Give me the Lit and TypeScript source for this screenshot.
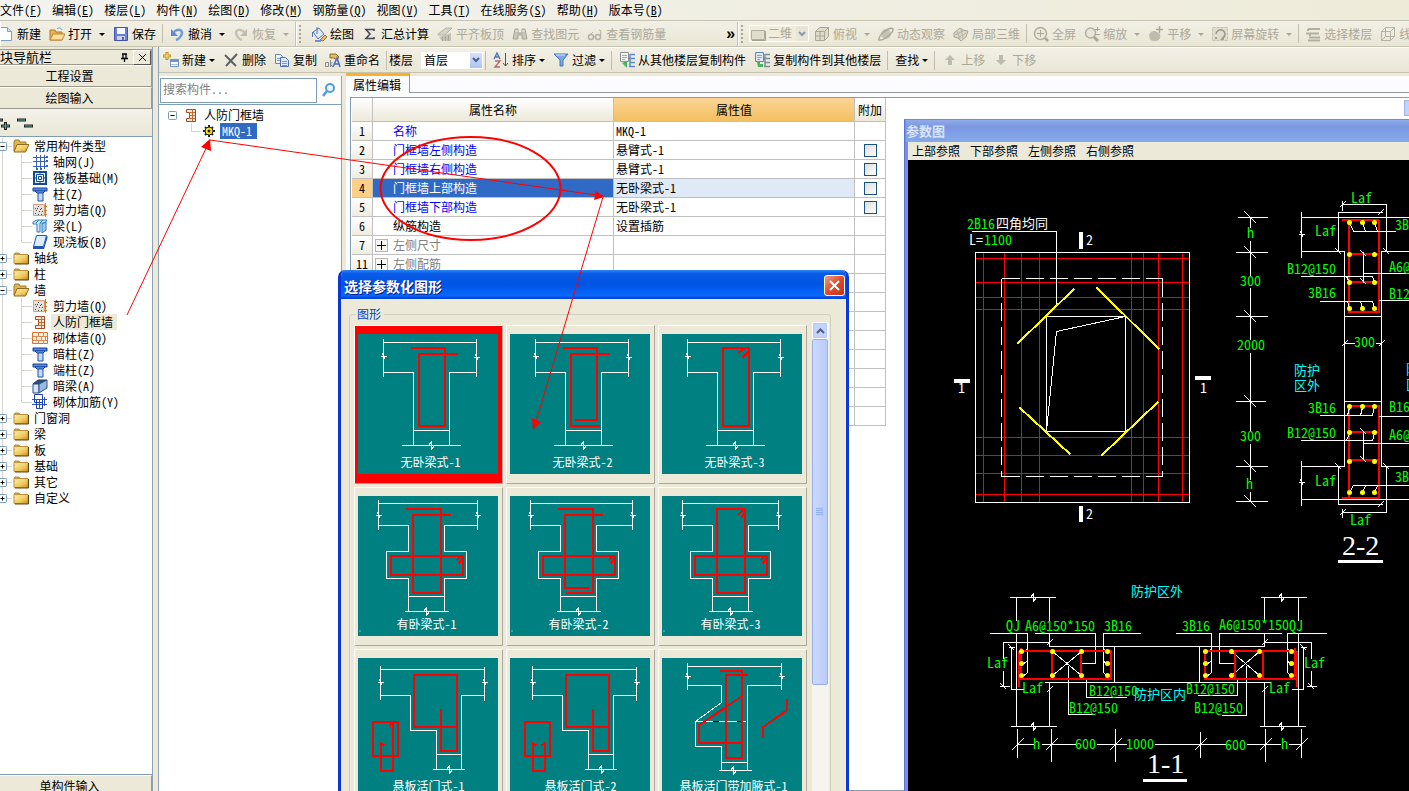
import { LitElement, html, svg, css, nothing } from "lit";
import { customElement, property, state } from "lit/decorators.js";
import { classMap } from "lit/directives/class-map.js";

const fonts = css`
  :host {
    font-family: "Noto Sans Mono CJK SC", "Noto Sans CJK SC", "Liberation Mono", monospace;
    font-size: 12px;
    line-height: 16px;
    color: #000;
  }
  * { box-sizing: border-box; }
`;

/* ---------- icons ---------- */

const gold = svg`<defs><linearGradient id="gold" x1="0" y1="0" x2="1" y2="1"><stop offset="0" stop-color="#fdf0b4"/><stop offset="0.6" stop-color="#f0c95c"/><stop offset="1" stop-color="#c98f1c"/></linearGradient></defs>`;
const folderShut = svg`${gold}<path d="M1 5l1-2h4l1 2z" fill="#e3bd55" stroke="#a98a35"/><path d="M1 4.500h14v9H1z" fill="url(#gold)" stroke="#b8933a"/><path d="M15.500 5v9H2" fill="none" stroke="#5e4510"/>`;
const folderOpen = svg`${gold}<path d="M1 4l1-2h4l1 2h6v9H1z" fill="#e0b64c" stroke="#9a7930"/><path d="M4 6.500h12L12.500 14H1z" fill="url(#gold)" stroke="#8f6b1e"/>`;
const columnIcon = svg`<path d="M1 2h14v3H1z" fill="#5b8be0" stroke="#123f99"/><path d="M3 5h10l-2 2H5z" fill="#a9c7f7" stroke="#123f99"/><path d="M6 7h5v8H6z" fill="#c3dafb" stroke="#1b4fae"/>`;
const wallDots = svg`<path d="M1.500 2.500h11v11h-11z" fill="#e4e0dc" stroke="#d9a080"/><path d="M3 6.500h1M6 4.500h1M9 6.500h1M4 8.500h1M7 9.500h1M10 9.500h1M3 11.500h1M6 12.500h1M9 12.500h1M5 6.500h1M8 7.500h1" stroke="#444"/><path d="M13.500 1v14M12 4.500h3M12 8.500h3M12 12.500h3" stroke="#d9772b"/>`;
const frameWall = svg`<path d="M3.500 2.500h9v12h-9v-3h3v-6h-3z" fill="#fbe7d6" stroke="#a3481c"/><path d="M9.500 2v12M6 5.500h6M6 8.500h6M6 11.500h6" stroke="#c76a35" fill="none"/>`;
const cube = svg`<path d="M1.500 5.500l4-4h9v9l-4 4h-9z" fill="#dedbcb" stroke="#a9a796"/><path d="M1.500 5.500h9v9M10.500 5.500l4-4M6 5.500v9M1.500 10h9" fill="none" stroke="#a9a796"/>`;

const ICONS: Record<string, unknown> = {
  page: svg`<path d="M2.500 1.500h7l4 4v9h-11z" fill="#fdfeff" stroke="#7e9cc4"/><path d="M9.500 1.500v4h4" fill="#cfe0f6" stroke="#7e9cc4"/>`,
  open: svg`<path d="M1 4h5l1 2h6v8H1z" fill="#e8b45a" stroke="#b07a2a"/><path d="M4 8h12l-3 6H1z" fill="#ffe09a" stroke="#b98732"/><path d="M8 3c2-2 4-1 5 1" fill="none" stroke="#6d94c9"/>`,
  save: svg`<path d="M1.500 1.500h13v13h-13z" fill="#6a7fd6" stroke="#4455ad"/><path d="M4 2h8v6H4z" fill="#f4f7ff"/><path d="M4 10h8v4H4z" fill="#c9cfe6"/><path d="M9 11h2v3H9z" fill="#5566b8"/>`,
  undo: svg`<path d="M5 6c4-4 8-2 8 1-1 4-3 6-6 7" fill="none" stroke="#6c9be6" stroke-width="2.5"/><path d="M2 3v7h7z" fill="#5a8ae0"/>`,
  redo: svg`<path d="M11 6C7 2 3 4 3 7c1 4 3 6 6 7" fill="none" stroke="#c5c3b6" stroke-width="2.5"/><path d="M14 3v7H7z" fill="#bdbbae"/>`,
  paint: svg`<path d="M2 6l6-4 5 6-6 5z" fill="#dfe9f7" stroke="#4f77b8"/><path d="M6 1v7M1.500 6v5" stroke="#4f77b8" fill="none"/><path d="M9 14l5-5 2 2-4 4z" fill="#e6bd6b" stroke="#987336"/><path d="M4 15h6" stroke="#6c8fe0" stroke-width="2"/>`,
  sigma: svg`<path d="M12 5V3.500H4l4 4.500-4 4.500h8V11" fill="none" stroke="#444a55" stroke-width="1.600"/>`,
  slab: svg`<path d="M1 8l8-6h6l-7 7H1z" fill="#d6d4c6" stroke="#b5b3a5"/><path d="M2 11l12-4v8H5z" fill="#c4c2b5"/><path d="M5.500 11v4M8.500 10v5M11.500 9v6" stroke="#a9a799"/>`,
  binoc: svg`<path d="M3 3h3v4h4V3h3l2 10h-5V9H6v4H1z" fill="#c6c4b7" stroke="#a8a698"/><path d="M3 5h3M10 5h3" stroke="#efeee6"/>`,
  glasses: svg`<circle cx="4" cy="11" r="2.500" fill="none" stroke="#b3b1a3" stroke-width="1.500"/><circle cx="11" cy="11" r="2.500" fill="none" stroke="#b3b1a3" stroke-width="1.500"/><path d="M6 11h2M13.500 10l.5-5-2-1M2 10l4-4" fill="none" stroke="#b3b1a3"/>`,
  plane: svg`<path d="M1.500 4.500h13v9h-13z" fill="#dfdccb" stroke="#b1af9e"/><path d="M15.500 5v9.500H2" fill="none" stroke="#a3a191"/>`,
  cube,
  orbit: svg`<circle cx="8" cy="8" r="5" fill="#c5c3b4"/><path d="M1 14C0 9 12 0 15 3c1 3-9 12-14 11z" fill="none" stroke="#a9a798" stroke-width="1.500"/>`,
  part3d: svg`<path d="M1 7l6-5 3 2 5 1-2 6-5 4-3-3-4-1z" fill="#dbd8c8" stroke="#a9a798"/><path d="M4 5l3 8M8 3l2 10M2 9l10-5M5 12l8-5" stroke="#b5b3a4" fill="none"/>`,
  full: svg`<circle cx="7.500" cy="7.500" r="6" fill="#eae7da" stroke="#b1af9f" stroke-width="1.500"/><path d="M4 7.500h7M7.500 4v7" stroke="#a9a798"/><path d="M12 12l3 3" stroke="#a9a798" stroke-width="2.500"/>`,
  zoomIn: svg`<circle cx="6.500" cy="7" r="5" fill="#eae7da" stroke="#b1af9f" stroke-width="1.500"/><path d="M10 11l4 4" stroke="#a9a798" stroke-width="3"/><path d="M13.500 1v4M11 3.500h5M11 8.500h5" stroke="#a9a798"/>`,
  pan: svg`<path d="M1 9l2-3 2-1 2 0 2 1 3 2c1 3 0 7-5 7S2 13 1 9z" fill="#bebcae"/><path d="M11.500 0v7M8 3.500h7" stroke="#a9a798" stroke-width="1.500"/>`,
  rotate: svg`<path d="M.5 1.500h15v13H.5z" fill="#e0ddce" stroke="#c4c2b3" stroke-dasharray="3 1"/><path d="M4 8a4.500 4.500 0 1 1 7 4" fill="none" stroke="#99978a" stroke-width="1.500"/><path d="M12 9v5H8z" fill="#a3a194"/><path d="M3 12h2" stroke="#a3a194" stroke-width="2"/>`,
  floors: svg`<path d="M3 3h12M1 7.500h13M4 11.500h11M3 14.500h12M3 3v2M5 8v2" stroke="#b1af9f" stroke-width="2"/>`,
  wire: svg`<path d="M1.500 5.500l4-4h9v9l-4 4h-9zM1.500 5.500h9v9M10.500 5.500l4-4M5.500 1.500v9h9M5.500 10.500l-4 4" fill="none" stroke="#b5b3a4"/>`,
  add: svg`<path d="M4 0v8M0 4h8" stroke="#ba9428" stroke-width="3"/><path d="M4 1v6M1 4h6" stroke="#ffe36a"/><path d="M7.500 7.500h8v7h-8z" fill="#fff" stroke="#6e93cf"/><path d="M7 7h9v3H7z" fill="#6e93cf"/><path d="M8 12.500h7" stroke="#a9c2e8"/>`,
  del: svg`<path d="M2 3l11 11M14 2L3 14" stroke="#5e6266" stroke-width="2"/>`,
  copy: svg`<path d="M1.500 2.500h5l3 3v6h-8z" fill="#eef4fd" stroke="#6887b9"/><path d="M6.500 5.500h5l3 3v6h-8z" fill="#dce8fa" stroke="#4c70ac"/><path d="M8 9.500h5M8 11.500h5M8 13.500h5M3 6.500h3M3 8.500h3" stroke="#7a9ad0"/>`,
  rename: svg`<path d="M5 2h6l3 3-2 3-3-2H5z" fill="#e3bb63" stroke="#8e6d2b"/><path d="M.5 10.500h3v4h-3zM5.500 8v7M5.500 12l2-2M5.500 12l2 3" stroke="#868686" fill="none"/><path d="M8 15l4-9 3 9M10 12h4" fill="none" stroke="#4c6fc2" stroke-width="1.600"/>`,
  sort: svg`<path d="M1 7l3-6 3 6M2 5h4" fill="none" stroke="#4e74b5" stroke-width="1.400"/><path d="M2 9h5l-5 6h5" fill="none" stroke="#b56a6f" stroke-width="1.400"/><path d="M12.500 1v13M10 11l2.500 3 2.500-3" fill="none" stroke="#555"/>`,
  filter: svg`<path d="M1 2h14l-5 6v6H7V8z" fill="#7ba9e8" stroke="#4675bd"/><path d="M3 3h9" stroke="#d5e6fb"/>`,
  copyFrom: svg`<path d="M1.500.5h8v9h-8z" fill="#f4f4f0" stroke="#88908e"/><path d="M3 3.500h5M3 5.500h5M3 7.500h3" stroke="#a3a8a5"/><path d="M3 11l5 5V9z" fill="#46b563"/><path d="M11 2.500h5M10 6.500h6M11 10.500h5M10 14.500h6M11 2v13" stroke="#5d8bd4" stroke-width="1.500" fill="none"/>`,
  copyTo: svg`<path d="M1.500.5h8v9h-8z" fill="#e2ecfb" stroke="#5c82c4"/><path d="M3 3.500h5M3 5.500h5M3 7.500h3" stroke="#7fa0d8"/><path d="M3 10h3v2h3v3H4z" fill="#46b563"/><path d="M11 2.500h5M10 6.500h6M11 10.500h5M10 14.500h6M11 2v13" stroke="#7f8c9c" stroke-width="1.500" fill="none"/>`,
  up: svg`<path d="M8 3l5 5h-3v5H6V8H3z" fill="#bdbbae"/>`,
  down: svg`<path d="M8 13l5-5h-3V3H6v5H3z" fill="#bdbbae"/>`,
  lens: svg`<circle cx="9" cy="6" r="4" fill="#eef7ff" stroke="#4d9ede" stroke-width="2"/><path d="M6 9l-4 5" stroke="#4d9ede" stroke-width="2.500"/>`,
  grid: svg`<path d="M1 3.500h14M1 7.500h14M1 12.500h14M4.500 1v14M8.500 1v14M12.500 1v14" stroke="#3463b8"/><path d="M14 3h2M14 7h2M14 12h2M4 15h2M8 15h2" stroke="#3463b8" stroke-width="2"/>`,
  raft: svg`<path d="M2 2h12v12H2z" fill="#e6f1fc" stroke="#124b90" stroke-width="2"/><path d="M4.500 4.500h7v7h-7zM8 2v3M8 11v3M2 8h3M11 8h3M6.500 6.500h3v3h-3z" fill="none" stroke="#124b90"/>`,
  column: columnIcon,
  wallDots,
  beam: svg`<path d="M1 4l4-2h10l-2 3H8v9H5V6H1z" fill="#cfe8fb" stroke="#2a7cc4"/><path d="M10 6l4-2v8l-4 3z" fill="#9dcdf5" stroke="#2a7cc4"/><path d="M4 5l3-3M8 5l3-3" stroke="#2a7cc4"/>`,
  slabBlue: svg`<path d="M4.500 1.500h10l-3 11h-10z" fill="#dcecff" stroke="#2357ae"/><path d="M1 13h10.500l3-11h1v2l-3.500 11H1z" fill="#2357ae"/>`,
  frameWall,
  brick: svg`<path d="M.5 2.500h15v11H.5z" fill="#fff0e2" stroke="#d7742f"/><path d="M1 6.500h14M1 10.500h14M6.500 2v4M11.500 2v4M4.500 6v4M9.500 6v4M13.500 6v4M6.500 10v4M11.500 10v4" stroke="#d98a52"/>`,
  hidBeam: svg`<path d="M1 6l5-4h9l-4 4z" fill="#2d4f80" stroke="#1e3a66"/><path d="M1 6h6v9H1z" fill="#d5e5f5" stroke="#2d4f80"/><path d="M7 6l8-4v8l-8 5z" fill="#9cb9dd" stroke="#2d4f80"/>`,
  brickBar: svg`<path d="M2.500.5h8v8h-8zM4.500 5.500h6v9h-6z" fill="none" stroke="#1b3fae"/><path d="M0 5.500h15M0 10.500h15M12.500 3v9M7.500 5v10" stroke="#2b52c0"/>`,
  folderShut,
  folderOpen,
  gear: svg`<path d="M8 2v12M2 8h12M4 4l8 8M12 4l-8 8" stroke="#222" stroke-width="2"/><circle cx="8" cy="8" r="4" fill="#f7e527" stroke="#222"/><circle cx="8" cy="8" r="1.500" fill="#222"/>`,
};

const icon = (name: string) =>
  html`<svg class="ic" width="16" height="16" viewBox="0 0 16 16" aria-hidden="true">${ICONS[name]}</svg>`;

/* ---------- shape previews ---------- */

const vBreak = (x: number, y: number) =>
  svg`<path d="M${x - 3} ${y}h6M${x - 2} ${y - 1}l2 -3M${x} ${y + 3}l2 -3"/>`;
const hBreak = (x: number, y: number) => svg`<path d="M${x - 3} ${y}l3 -4v8l3 -4"/>`;

type Shape = { name: string; mid: number; white: unknown; red: string; dot?: boolean };

const plain = svg`<path d="M25 4V42M118 4V42M25 8H118M25 38H55V111M118 38H91V111M55 96H91M43 111H102"/>${vBreak(25, 22)}${vBreak(118, 23)}${hBreak(73, 111)}`;
const cross = (right: number) => svg`<path d="M20 3V33M${right} 3V33M20 7H${right}M20 29H50V55H28V82H50V115M${right} 29H86V55H108V82H86V115M50 100H86M46 115H90"/>${vBreak(20, 19)}${vBreak(right, 19)}${hBreak(68, 115)}`;
const hang = svg`<path d="M22 7V41M126 8V42M22 11H126M22 37H52V72H78V111M126 37H103V111M78 96H103M74 111H106"/>${vBreak(22, 24)}${vBreak(126, 24)}${hBreak(91, 111)}`;
const haunch = svg`<path d="M25 4V31M119 4V31M25 8H119M25 27H59V44L33 63V88H59V112M119 27H85V112M59 104H85M56 112H89M33 63H83"/><path d="M50 63h6M74 63h6" stroke="#000"/>${vBreak(25, 18)}${vBreak(119, 18)}${hBreak(71, 112)}`;
const bar = "M32 59H104V78H32ZM98 64L103 59M100 67L104 62";
const hangBar = "M55 16H98V68H55ZM82 50V92H98V68M14 63H39V97H14Z";

const SHAPES: Shape[] = [
  { name: "无卧梁式-1", mid: 72, white: plain, red: "M52 13H86V91H60V19H99" },
  { name: "无卧梁式-2", mid: 72, white: plain, red: "M52 13H86V85H64M99 19H60V91H89" },
  { name: "无卧梁式-3", mid: 72, white: plain, red: "M60 13H86V91H60ZM76 18L82 14M80 23L86 17" },
  { name: "有卧梁式-1", mid: 68, dot: true, white: cross(119), red: "M47 12H82V96H54V18H92" + bar },
  { name: "有卧梁式-2", mid: 68, dot: true, white: cross(122), red: "M47 12H82V96H55M92 18H54V91H78" + bar },
  { name: "有卧梁式-3", mid: 68, dot: true, white: cross(116), red: "M54 12H82V96H54ZM75 19L81 13M79 21L82 16" + bar },
  { name: "悬板活门式-1", mid: 70, white: hang, red: hangBar + "M26 87L22 85V112H34V64L31 68" },
  { name: "悬板活门式-2", mid: 70, white: hang, red: hangBar + "M26 87L22 85V112H34V85L31 87" },
  { name: "悬板活门带加腋式-1", mid: 71, white: haunch, red: "M57 12H79V99H63V16H85M79 38L36 67V84H79M124 40V52L100 69V79" },
];

@customElement("shape-preview")
class ShapePreview extends LitElement {
  @property({ attribute: false }) shape!: Shape;
  static styles = [fonts, css`
    :host { display: block; }
    svg { display: block; background: #008080; }
    text { fill: #fff; text-anchor: middle; font-size: 12px; }
    .w { fill: none; stroke: #fff; shape-rendering: crispEdges; }
    .r { fill: none; stroke: #f00; stroke-width: 2; shape-rendering: crispEdges; }
    .d { fill: #fff; }
  `];
  render() {
    const s = this.shape;
    return html`<svg width="140" height="140" viewBox="-0.5 -0.5 140 140">
      <g class="w">${s.white}</g><path class="r" d=${s.red} />
      ${s.dot ? svg`<rect class="d" x="1" y="134" width="1" height="1"/>` : nothing}
      <text x=${s.mid} y="132">${s.name}</text>
    </svg>`;
  }
}

/* ---------- parameter drawing ---------- */

const slashes = (pts: number[][], r = 6, dir = 1) =>
  svg`<path d=${pts.map(([x, y]) => `M${x - r} ${y - r * dir}L${x + r} ${y + r * dir}`).join("")} />`;
const dots = (xs: number[], ys: number[]) =>
  xs.flatMap((x) => ys.map((y) => svg`<circle cx=${x} cy=${y} r="2.500"/>`));
const labels = (cls: string, rows: [number, number, string][]) =>
  rows.map(([x, y, t]) => svg`<text class=${cls} x=${x} y=${y}>${t}</text>`);

@customElement("cad-drawing")
class CadDrawing extends LitElement {
  static styles = [fonts, css`
    :host { display: block; background: #000; overflow: hidden; }
    svg { display: block; width: 100%; height: 100%; }
    .w, .r, .rr, .y { fill: none; shape-rendering: crispEdges; }
    .w { stroke: #fff; }
    .r { stroke: #f00; }
    .rr { stroke: #f00; stroke-width: 2; }
    .y { stroke: #ff0; stroke-width: 2; }
    .fy { fill: #ff0; }
    .fw { fill: #fff; }
    text { font-size: 14px; }
    .g { fill: #0f0; }
    .t { fill: #fff; }
    .zh { fill: #fff; font-size: 13px; }
    .c { fill: #0ff; font-size: 13px; }
    .big { fill: #fff; font-family: "Liberation Serif", serif; font-size: 28px; }
  `];
  render() {
    return html`<svg><g transform="translate(-907.5 -159.5)">
      ${svg`
      <path class="r" d="M983 252V502M1004 252V502M1021 252V502M1039 252V502M1131 252V502M1143 252V502M1158 252V502M1182 252V502M975 258H1189M975 282H1189M975 297H1189M975 309H1189M975 437H1189M975 455H1189M975 473H1189M975 494H1189"/>
      <path class="w" d="M975 252H1189V502H975ZM971 231H1056V305M1046 316H1125V431H1046ZM1125 316L1056 331L1046 431"/>
      <path class="w" stroke-dasharray="18 6" d="M1001 278H1162M1001 476H1162M1001 278V476M1162 278V476"/>
      <path class="y" d="M1074 288L1017 343M1096 287L1159 349M1019 407L1070 454M1158 401L1101 455"/>

      <path class="w" d="M1237 217H1267M1235 252H1267M1235 316H1267M1235 401H1265M1235 466H1267M1235 501H1267M1250 217V227M1250 240V275M1250 287V339M1250 352V431M1250 443V479M1250 491V501"/>
      <g class="w">${slashes([[1250, 217], [1250, 252], [1250, 316], [1250, 401], [1250, 466], [1250, 501]])}</g>

      <path class="w" d="M1301 211V257M1301 217H1415M1301 251H1344V466H1301M1415 251H1381V466H1415M1338 251V212H1382M1342 200V210M1342 204H1386V251M1344 316H1381M1344 401H1381M1344 343H1354M1375 343H1381M1301 460V505M1301 499H1415M1338 466V504H1382M1386 466V512H1342M1342 508V517"/>
      <g class="w">${vBreak(1301, 234)}${vBreak(1301, 482)}
        ${slashes([[1338, 251], [1386, 251], [1338, 466], [1386, 466]], 3)}
        ${slashes([[1342, 204], [1380, 212], [1344, 343], [1381, 343], [1380, 504], [1342, 512]], 3, -1)}</g>
      <path class="rr" d="M1341 219H1378M1348 219V311H1378V219M1348 253H1378M1348 281H1378M1341 497H1378M1348 497V405H1378V497M1348 431H1378M1348 459H1378"/>
      <path class="w" d="M1349 222L1353 231H1395M1362 222L1365 231M1374 222L1377 231M1300 276H1372L1374 282M1346 276L1349 282M1319 301H1372L1374 308M1347 301L1349 308M1360 301L1362 308M1363 251V282M1363 273H1415M1378 300H1415M1319 415H1372L1374 407M1349 407L1347 415M1362 407L1360 415M1378 416H1415M1300 440H1372L1374 433M1346 440L1349 433M1363 431V459M1363 443H1415M1349 492L1353 485H1415M1362 492L1365 485M1374 492L1377 485"/>
      <g class="w">${slashes([[1363, 253], [1363, 281], [1363, 431], [1363, 459]], 3)}</g>
      <g class="fy">${dots([1349, 1374], [222, 254, 282, 308, 406, 432, 461, 492])}${dots([1362], [222, 308, 406, 492])}</g>

      <path class="w" d="M1009 597H1055M1010 726H1056M1260 597H1306M1259 726H1305M1016 597V620M1016 633V726M1049 597V620M1049 633V646M1049 682V726M1264 597V620M1264 633V646M1264 682V726M1298 597V620M1298 633V726M1049 646H1264M1044 682H1270M1114 646V682M1199 646V682"/>
      <path class="w" d="M989 633H1027V672L1021 677M1034 633H1095V663H1080M1140 633H1103V672L1107 676M1175 633H1211V672L1205 677M1281 633H1219V663H1235M1326 633H1287V672L1291 676M1027 648L1021 653M1027 660L1021 665M1103 648L1107 653M1103 660L1107 665M1211 648L1205 653M1211 660L1205 665M1287 648L1291 653M1287 660L1291 665"/>
      <path class="w" d="M1003 658V642H1049M1003 670V686M999 686H1009M1011 647V689H1023M1008 647H1014M1311 658V642H1264M1311 670V686M1306 686H1316M1303 647V689H1291M1300 647H1306M1052 651L1081 675M1081 651L1052 675M1231 651L1259 675M1259 651L1231 675M1068 665V714H1094M1086 678V697H1126M1246 665V715H1221M1237 678V695H1197"/>
      <g class="w">${hBreak(1033, 597)}${hBreak(1033, 726)}${hBreak(1281, 597)}${hBreak(1281, 726)}
        ${slashes([[1049, 642], [1264, 642], [1049, 689], [1264, 689]], 3, -1)}
        ${slashes([[1003, 686], [1011, 647], [1303, 647], [1311, 686]], 3)}</g>
      <path class="rr" d="M1019 650H1110V678H1019M1020 647V676M1018 650V686M1051 650V678M1080 650V678M1295 650H1204V678H1295M1294 647V676M1296 650V686M1234 650V678M1262 650V678"/>
      <g class="fy">${dots([1021, 1107, 1205, 1291], [651, 663, 675])}${dots([1052, 1081, 1231, 1259], [651, 675])}</g>

      <path class="w" d="M1017 728V757M1051 728V761M1115 728V761M1200 731V757M1265 728V761M1301 728V757M1017 744H1033M1041 744H1075M1096 744H1126M1154 744H1225M1246 744H1280M1288 744H1301"/>
      <g class="w">${slashes([[1017, 744], [1051, 744], [1115, 744], [1200, 744], [1265, 744], [1301, 744]], 6, -1)}</g>
      `}
    </g>
    <g transform="translate(-908 -160)">
      ${svg`
      <path class="fw" d="M1079 232h4v17h-4zM1079 506h4v16h-4zM954 379h16v4h-16zM1195 376h16v4h-16z"/>
      <path class="fw" d="M1338 560h45v3h-45zM1143 779h44v3h-44z"/>
      ${labels("g", [
        [967, 229, "2B16"], [984, 245, "1100"],
        [1247, 238, "h"], [1240, 286, "300"], [1237, 350, "2000"], [1240, 441, "300"], [1246, 489, "h"],
        [1351, 203, "Laf"], [1315, 236, "Laf"], [1395, 230, "3B"], [1287, 274, "B12@150"], [1389, 272, "A6@"],
        [1308, 298, "3B16"], [1389, 299, "B12"], [1354, 347, "300"], [1308, 413, "3B16"], [1389, 412, "B16"],
        [1287, 438, "B12@150"], [1389, 440, "A6@"], [1315, 486, "Laf"], [1395, 482, "3B"], [1350, 525, "Laf"],
        [1006, 631, "QJ"], [1025, 631, "A6@150*150"], [1104, 631, "3B16"],
        [1182, 631, "3B16"], [1219, 630, "A6@150*150"], [1289, 631, "QJ"],
        [987, 668, "Laf"], [1022, 693, "Laf"], [1304, 668, "Laf"], [1269, 693, "Laf"],
        [1089, 696, "B12@150"], [1069, 713, "B12@150"], [1186, 694, "B12@150"], [1194, 713, "B12@150"],
        [1033, 749, "h"], [1075, 749, "600"], [1126, 749, "1000"], [1225, 750, "600"], [1281, 749, "h"],
      ])}
      ${labels("t", [[1086, 245, "2"], [1086, 519, "2"], [958, 393, "1"], [1200, 393, "1"], [969, 245, "L="]])}
      ${labels("zh", [[996, 228, "四角均同"]])}
      ${labels("c", [[1294, 375, "防护"], [1294, 390, "区外"], [1406, 374, "防"], [1406, 389, "区"], [1131, 596, "防护区外"], [1134, 699, "防护区内"]])}
      ${labels("big", [[1342, 555, "2-2"], [1147, 773, "1-1"]])}
      `}
    </g></svg>`;
  }
}

/* ---------- application ---------- */

type Tool = { icon?: string; label: string; off?: boolean; menu?: boolean };
type Node = { icon: string; label: string; open?: boolean; kids?: Node[]; current?: boolean };

const MENUS = [["文件", "F"], ["编辑", "E"], ["楼层", "L"], ["构件", "N"], ["绘图", "D"], ["修改", "M"], ["钢筋量", "Q"], ["视图", "V"], ["工具", "T"], ["在线服务", "S"], ["帮助", "H"], ["版本号", "B"]];

const dir = (label: string, kids?: Node[]): Node => ({ icon: kids ? "folderOpen" : "folderShut", label, open: !!kids, kids });
const TREE: Node[] = [
  dir("常用构件类型", [
    { icon: "grid", label: "轴网(J)" }, { icon: "raft", label: "筏板基础(M)" }, { icon: "column", label: "柱(Z)" },
    { icon: "wallDots", label: "剪力墙(Q)" }, { icon: "beam", label: "梁(L)" }, { icon: "slabBlue", label: "现浇板(B)" },
  ]),
  dir("轴线"), dir("柱"),
  dir("墙", [
    { icon: "wallDots", label: "剪力墙(Q)" }, { icon: "frameWall", label: "人防门框墙", current: true }, { icon: "brick", label: "砌体墙(Q)" },
    { icon: "column", label: "暗柱(Z)" }, { icon: "column", label: "端柱(Z)" }, { icon: "hidBeam", label: "暗梁(A)" }, { icon: "brickBar", label: "砌体加筋(Y)" },
  ]),
  dir("门窗洞"), dir("梁"), dir("板"), dir("基础"), dir("其它"), dir("自定义"),
];

const ROWS: { no: string; name: string; value?: string; kind: string; check?: boolean }[] = [
  { no: "1", name: "名称", value: "MKQ-1", kind: "link" },
  { no: "2", name: "门框墙左侧构造", value: "悬臂式-1", kind: "link", check: true },
  { no: "3", name: "门框墙右侧构造", value: "悬臂式-1", kind: "link", check: true },
  { no: "4", name: "门框墙上部构造", value: "无卧梁式-1", kind: "sel", check: true },
  { no: "5", name: "门框墙下部构造", value: "无卧梁式-1", kind: "link", check: true },
  { no: "6", name: "纵筋构造", value: "设置插筋", kind: "norm" },
  { no: "7", name: "左侧尺寸", kind: "group" },
  { no: "11", name: "左侧配筋", kind: "group" },
  ...Array.from({ length: 8 }, () => ({ no: "", name: "", kind: "norm" })),
];

@customElement("app-root")
class AppRoot extends LitElement {
  @state() private picked = 0;

  static styles = [fonts, css`
    :host { display: flex; flex-direction: column; position: relative; height: 100vh; overflow: hidden; background: #ece9d8; white-space: nowrap; }
    button, input, select { font: inherit; color: inherit; margin: 0; }
    button { background: none; border: 0; padding: 0; }
    .ic { display: block; flex: none; }
    .menus { display: flex; gap: 10px; height: 20px; align-items: center; background: linear-gradient(90deg, #f3f3f0, #eeebd9); }
    .bar { display: flex; align-items: center; background: linear-gradient(#f2f0e6, #e9e6d5); border-top: 1px solid #fff; border-bottom: 1px solid #c6c3b1; }
    .bar.main { flex: none; height: 27px; border-top-color: #c6c3b1; }
    .bar.sub { flex: none; height: 26px; }
    .dock { display: flex; align-items: center; height: 24px; border-left: 1px solid #fff; border-right: 1px solid #c6c3b1; padding-right: 2px; flex: none; overflow: hidden; }
    .dock.rest { flex: 1; border-right: 0; min-width: 0; }
    .grip { width: 3px; height: 18px; margin: 0 5px 0 2px; border-left: 2px dotted #a9a697; flex: none; }
    .tool { display: flex; align-items: center; gap: 3px; padding: 0 4px; height: 22px; flex: none; }
    .tool.off { color: #aca899; }
    .tool.first { margin-left: -7px; }
    .caret { border: 3px solid transparent; border-top-color: currentColor; border-bottom: 0; width: 6px; margin: 1px 0 0 4px; }
    .sub .caret { margin-left: 0; }
    .sep { width: 1px; height: 19px; background: #c1bdaa; margin: 0 2px; flex: none; }
    .sub .sep { margin-right: 3px; }
    .more { font-weight: bold; margin-left: 56px; height: 22px; line-height: 14px; font-family: "Liberation Sans", sans-serif; font-size: 16px; }
    .combo { display: flex; align-items: center; position: relative; height: 17px; background: #fff; border: 1px solid #fff; }
    .combo select { appearance: none; border: 0; background: none; padding: 0 20px 2px 2px; height: 15px; width: 60px; line-height: 13px; outline: 0; opacity: 1; }
    .combo .drop { position: absolute; right: 0; top: 0; width: 12px; height: 15px; background: linear-gradient(#d5e1fb, #aec3f3); display: grid; place-items: center; pointer-events: none; }
    .combo.off { background: #efecde; color: #aca899; width: 60px; margin-right: 1px; }
    .combo.off select { width: 42px; padding-right: 14px; }
    .combo.off .drop { background: #e5e2d2; opacity: 0.6; }
    .caption { padding: 0 8px 0 0; margin-left: -1px; }

    .body { flex: 1; display: flex; min-height: 0; }
    .nav { flex: 0 0 153px; display: flex; flex-direction: column; padding-top: 2px; border-right: 1px solid #8e9fae; }
    .nav h2 { margin: 0; display: flex; align-items: center; height: 16px; font-size: 13px; font-weight: normal; border: 1px solid #9c998c; border-left: 0; flex: none; }
    .nav h2 span { flex: 1; }
    .nav h2 button { width: 18px; height: 15px; border: 1px solid #fff; border-right-color: #555; border-bottom-color: #555; display: grid; place-items: center; }
    .pin { margin-right: 4px; }
    .page { flex: none; height: 22px; border-top: 1px solid #fff; border-bottom: 1px solid #9c998c; border-right: 1px solid #9c998c; text-align: center; padding-right: 12px; }
    .page.last { margin-bottom: -6px; }
    .tiny { flex: none; display: flex; align-items: center; height: 28px; background: linear-gradient(#f4f3ea, #eae7d7); border-bottom: 1px solid #7f9db9; }
    .tree { list-style: none; margin: 0; padding: 1px 0 0; background: #fff; flex: 1; overflow: hidden; border-bottom: 1px solid #7f9db9; }
    .tree ul { list-style: none; margin: 0; padding: 0; }
    .node { display: flex; align-items: center; height: 16px; }
    .node .name { padding: 0 3px 0 5px; }
    .kid .name { margin-left: 3px; padding: 0 4px 0 2px; }
    .kid.current .name { background: #ece9d8; }
    .split { flex: 0 0 6px; background: #ece9d8; border-right: 1px solid #8ca4bb; }
    .main-area { flex: 1; display: flex; flex-direction: column; min-width: 0; }
    .work { flex: 1; display: flex; min-height: 0; padding-top: 3px; }
    .comps { flex: 0 0 183px; display: flex; flex-direction: column; background: #fff; border-right: 1px solid #8ca4bb; }
    .search { display: flex; align-items: center; height: 29px; flex: none; border-bottom: 1px solid #7f9db9; background: linear-gradient(90deg, #fff, #fbfaf6); }
    .search input { width: 157px; height: 25px; margin-left: 1px; border: 1px solid #7f9db9; padding: 0 2px 4px; outline: 0; background: #fff; }
    .search input::placeholder { color: #808080; opacity: 1; }
    .search button { margin-left: 4px; }
    .comp-tree { list-style: none; margin: 0; padding: 2px 0; }
    .comp-tree ul { list-style: none; margin: 0; padding: 0; }
    .comp-tree .node .name { padding: 0 5px; }
    .comp-tree .kid .name { background: #316ac5; color: #fff; margin-left: 3px; padding: 0 5px 0 2px; }
    .props { flex: 1; display: flex; flex-direction: column; min-width: 0; margin-left: 4px; background: #fcfcfe; }
    .tabs { display: flex; flex: none; height: 20px; margin-top: -3px; }
    .tab { width: 64px; height: 20px; border-top: 3px solid #ffb027; border-right: 1px solid #919b9c; background: #fcfcfe; padding-left: 7px; text-align: left; line-height: 14px; }
    .tabs i { flex: 1; border-bottom: 1px solid #919b9c; }
    .sheet { flex: 1; margin: 4px 0 0 4px; border: 1px solid #7f9db9; border-right: 0; background: #fff; padding-left: 1px; display: flex; justify-content: space-between; align-items: flex-start; }
    .stub { width: 5px; height: 16px; margin-top: 2px; background: #c2d3fb; border: 1px solid #9db4ea; border-right: 0; }
    table { border-collapse: separate; border-spacing: 0; table-layout: fixed; width: 534px; }
    th, td { border-right: 1px solid #c0c0c0; border-bottom: 1px solid #c0c0c0; padding: 0; font-weight: normal; height: 19px; overflow: hidden; line-height: 16px; }
    thead th { height: 24px; background: linear-gradient(#fff, #ece9d8); }
    thead th.hot { background: linear-gradient(#fbd595, #f3bf62); }
    .c0 { width: 21px; } .c1 { width: 241px; } .c2 { width: 241px; } .c3 { width: 31px; }
    tbody th { background: linear-gradient(#fff, #efecdf); text-align: center; }
    td.name { padding-left: 20px; }
    .link td.name { color: #00f; }
    .sel th { background: #ffcf87; }
    .sel td.name { background: #316ac5; color: #fff; }
    .sel td.value { background: #e0e9f6; }
    .group td.name { padding-left: 2px; color: #808080; }
    .group .wrap { display: flex; align-items: center; gap: 5px; }
    .plus { width: 13px; height: 13px; border: 1px solid #b5b5b5; background: #f8f8f5; color: #000; display: grid; place-items: center; }
    td.value { padding-left: 2px; }
    td.check { text-align: center; }
    td.check input { appearance: none; display: block; width: 13px; height: 13px; margin: 1px auto 0; border: 1px solid #1c5180; background: linear-gradient(135deg, #dcdcd7, #fff); }

    .cad { position: absolute; left: 904px; right: 0; top: 119px; bottom: 0; display: flex; flex-direction: column; background: #768ee6; border-top: 1px solid #6d8ae0; border-left: 1px solid #5c72d8; padding-left: 3px; }
    .cad h2 { margin: 0 0 0 -2px; height: 22px; font-size: 13px; line-height: 22px; color: #d8e4f8; background: linear-gradient(#8fabe9, #7b97e0 30%, #86a9ea); flex: none; }
    .cad nav { display: flex; gap: 10px; height: 18px; flex: none; background: #ece9d8; padding-left: 4px; align-items: center; }
    cad-drawing { flex: 1; min-height: 0; }

    .dlg { position: absolute; left: 338px; top: 270px; bottom: 0; width: 511px; display: flex; flex-direction: column; border: solid #0a38d8; border-width: 0 3px; border-radius: 7px 7px 0 0; background: #ece9d8; overflow: hidden; }
    .dlg header { display: flex; align-items: center; justify-content: space-between; flex: none; height: 29px; margin: 0 -3px; padding: 2px 4px 0 6px; background: linear-gradient(#2a86f8, #0a5ce8 12%, #0054e3 50%, #0668ff 88%, #003cd0); }
    .dlg h2 { margin: 0; font-size: 14px; line-height: 14px; color: #fff; text-shadow: 1px 1px #0a1883; }
    .close { width: 21px; height: 21px; border: 1px solid #fff; border-radius: 3px; background: linear-gradient(135deg, #f0a085, #e0492a 50%, #c5351a); display: grid; place-items: center; }
    fieldset { flex: 1; min-height: 0; margin: 7px 15px 0 8px; padding: 2px 1px 0 4px; border: 1px solid #d0d0bf; border-bottom: 0; border-radius: 4px 4px 0 0; display: flex; justify-content: space-between; overflow: hidden; }
    legend { color: #0046d5; padding: 0 3px 0 1px; margin-left: 2px; line-height: 16px; }
    .cells { display: grid; grid-template-columns: repeat(3, 149px); gap: 3px; align-content: start; padding-top: 1px; height: 0; }
    .cell { height: 159px; border: 1px solid #fff; border-right-color: #aca899; border-bottom-color: #aca899; padding: 8px 4px 9px 3px; }
    .cell.on { background: #f00; }
    .scroll { width: 17px; display: flex; flex-direction: column; background: #f5f4ee; height: 900px; margin-top: -2px; }
    .knob { flex: none; width: 16px; height: 17px; border: 1px solid #fff; border-radius: 2px; background: #c4d3fb; display: grid; place-items: center; outline: 1px solid #b4c8f6; outline-offset: -2px; }
    .thumb { flex: none; height: 346px; border: 1px solid #98b0e8; border-radius: 2px; background: linear-gradient(90deg, #cbd9fd, #b9cbf9); display: grid; place-items: center; width: 16px; }

    .marks { position: absolute; inset: 0; width: 100%; height: 100%; pointer-events: none; fill: none; stroke: #f00; }
    .marks .solid { fill: #f00; }
  `];

  private tool(t: Tool, first = false) {
    return html`<button class=${classMap({ tool: true, off: !!t.off, first })} ?disabled=${!!t.off}>
      ${t.icon ? icon(t.icon) : nothing}${t.label}${t.menu ? html`<i class="caret"></i>` : nothing}
    </button>`;
  }

  private box(x: number, open: boolean) {
    return svg`<rect x=${x - 4} y="4" width="8" height="8" rx="1" fill="#fff" stroke="#7b9ebd"/><path d=${`M${x - 2} 8H${x + 2}${open ? "" : `M${x} 6V10`}`} stroke="#000"/>`;
  }

  private branch(n: Node, last: boolean) {
    return html`<li>
      <div class="node">
        <svg class="ic" width="13" height="16" viewBox="-0.5 -0.5 13 16"><path d=${last ? "M2 0V8M6 8H12" : "M2 0V16M6 8H12"} stroke="#aca899" stroke-dasharray="1 1"/>${this.box(2, !!n.open)}</svg>
        ${icon(n.icon)}<span class="name">${n.label}</span>
      </div>
      ${n.kids ? html`<ul>${n.kids.map((k, i) => html`<li class=${classMap({ node: true, kid: true, current: !!k.current })}>
        <svg class="ic" width="32" height="16" viewBox="-0.5 -0.5 32 16"><path d=${`M2 0V16M21 0V${i === n.kids!.length - 1 ? 8 : 16}M22 8H32`} stroke="#aca899" stroke-dasharray="1 1"/></svg>
        ${icon(k.icon)}<span class="name">${k.label}</span></li>`)}</ul>` : nothing}
    </li>`;
  }

  render() {
    const chevron = html`<svg width="8" height="6" viewBox="0 0 8 6"><path d="M1 1l3 3 3-3" fill="none" stroke="#4d6185" stroke-width="2"/></svg>`;
    return html`
      <nav class="menus">${MENUS.map(([t, k]) => html`<button>${t}(<u>${k}</u>)</button>`)}</nav>
      <div class="bar main">
        <div class="dock">
          ${this.tool({ icon: "page", label: "新建" }, true)}
          ${this.tool({ icon: "open", label: "打开", menu: true })}
          ${this.tool({ icon: "save", label: "保存" })}
          <i class="sep"></i>
          ${this.tool({ icon: "undo", label: "撤消", menu: true })}
          ${this.tool({ icon: "redo", label: "恢复", menu: true, off: true })}
        </div>
        <div class="dock">
          <i class="grip"></i>
          ${this.tool({ icon: "paint", label: "绘图" })}
          ${this.tool({ icon: "sigma", label: "汇总计算" })}
          ${this.tool({ icon: "slab", label: "平齐板顶", off: true })}
          ${this.tool({ icon: "binoc", label: "查找图元", off: true })}
          ${this.tool({ icon: "glasses", label: "查看钢筋量", off: true })}
          <button class="more" aria-label="更多">»</button>
        </div>
        <div class="dock rest">
          <i class="grip"></i>
          <div class="combo off">${icon("plane")}<select aria-label="视图方式" disabled><option>二维</option></select><span class="drop">${chevron}</span></div>
          ${this.tool({ icon: "cube", label: "俯视", menu: true, off: true })}
          ${this.tool({ icon: "orbit", label: "动态观察", off: true })}
          ${this.tool({ icon: "part3d", label: "局部三维", off: true })}
          <i class="sep"></i>
          ${this.tool({ icon: "full", label: "全屏", off: true })}
          ${this.tool({ icon: "zoomIn", label: "缩放", menu: true, off: true })}
          ${this.tool({ icon: "pan", label: "平移", menu: true, off: true })}
          ${this.tool({ icon: "rotate", label: "屏幕旋转", menu: true, off: true })}
          <i class="sep"></i>
          ${this.tool({ icon: "floors", label: "选择楼层", off: true })}
          ${this.tool({ icon: "wire", label: "线", off: true })}
        </div>
      </div>

      <div class="body">
        <aside class="nav">
          <h2><span>块导航栏</span>
            <svg class="pin" width="9" height="9" viewBox="0 0 9 9"><path d="M2 1h5M3 1v4M6 1v4M1 5.500h7M4.500 6v3" stroke="#000" stroke-width="1.300" fill="none"/></svg>
            <button aria-label="关闭"><svg width="9" height="9" viewBox="0 0 9 9"><path d="M1 1l7 7M8 1L1 8" stroke="#000"/></svg></button>
          </h2>
          <button class="page">工程设置</button>
          <button class="page">绘图输入</button>
          <div class="tiny">
            <svg width="34" height="16" viewBox="0 0 34 16"><path d="M0 5h3M1 11h9M5.500 7v8M17 5h9M24 11h9" stroke="#222" stroke-width="3"/><path d="M0 5h2M2 11h7M5.500 8v6M18 5h7M25 11h7" stroke="#5aa79f"/></svg>
          </div>
          <ul class="tree">${TREE.map((n, i) => this.branch(n, i === TREE.length - 1))}</ul>
          <button class="page last">单构件输入</button>
        </aside>
        <div class="split"></div>
        <div class="main-area">
          <div class="bar sub">
            ${this.tool({ icon: "add", label: "新建", menu: true })}
            ${this.tool({ icon: "del", label: "删除" })}
            ${this.tool({ icon: "copy", label: "复制" })}
            ${this.tool({ icon: "rename", label: "重命名" })}
            <i class="sep"></i>
            <label class="caption" for="floor">楼层</label>
            <div class="combo"><select id="floor"><option>首层</option></select><span class="drop">${chevron}</span></div>
            <i class="sep"></i>
            ${this.tool({ icon: "sort", label: "排序", menu: true })}
            ${this.tool({ icon: "filter", label: "过滤", menu: true })}
            <i class="sep"></i>
            ${this.tool({ icon: "copyFrom", label: "从其他楼层复制构件" })}
            ${this.tool({ icon: "copyTo", label: "复制构件到其他楼层" })}
            <i class="sep"></i>
            ${this.tool({ label: "查找", menu: true })}
            <i class="sep"></i>
            ${this.tool({ icon: "up", label: "上移", off: true })}
            ${this.tool({ icon: "down", label: "下移", off: true })}
          </div>
          <div class="work">
            <section class="comps">
              <div class="search"><input type="search" placeholder="搜索构件..." aria-label="搜索构件" /><button aria-label="搜索">${icon("lens")}</button></div>
              <ul class="comp-tree"><li>
                <div class="node"><svg class="ic" width="24" height="16" viewBox="-0.5 -0.5 24 16">${this.box(13, true)}</svg>${icon("frameWall")}<span class="name">人防门框墙</span></div>
                <ul><li class="node kid"><svg class="ic" width="42" height="16" viewBox="-0.5 -0.5 42 16"><path d="M32 0V8H42" fill="none" stroke="#aca899" stroke-dasharray="1 1"/></svg>${icon("gear")}<span class="name">MKQ-1</span></li></ul>
              </li></ul>
            </section>
            <section class="props">
              <div class="tabs"><button class="tab">属性编辑</button><i></i></div>
              <div class="sheet">
                <table>
                  <colgroup><col class="c0" /><col class="c1" /><col class="c2" /><col class="c3" /></colgroup>
                  <thead><tr><th></th><th>属性名称</th><th class="hot">属性值</th><th>附加</th></tr></thead>
                  <tbody>${ROWS.map((r) => html`<tr class=${r.kind}>
                    <th>${r.no}</th>
                    <td class="name">${r.kind === "group" ? html`<div class="wrap"><button class="plus" aria-label="展开"><svg width="9" height="9" viewBox="0 0 9 9"><path d="M0 4.500h9M4.500 0v9" stroke="#000"/></svg></button>${r.name}</div>` : r.name}</td>
                    <td class="value">${r.value ?? ""}</td>
                    <td class="check">${r.check ? html`<input type="checkbox" aria-label=${r.name} />` : nothing}</td>
                  </tr>`)}</tbody>
                </table>
                <span class="stub"></span>
              </div>
            </section>
          </div>
        </div>
      </div>

      <section class="cad">
        <h2>参数图</h2>
        <nav><button>上部参照</button><button>下部参照</button><button>左侧参照</button><button>右侧参照</button></nav>
        <cad-drawing></cad-drawing>
      </section>

      <section class="dlg" role="dialog" aria-labelledby="dlg-title">
        <header><h2 id="dlg-title">选择参数化图形</h2>
          <button class="close" aria-label="关闭"><svg width="13" height="13" viewBox="0 0 13 13"><path d="M2 2l9 9M11 2l-9 9" stroke="#fff" stroke-width="2"/></svg></button></header>
        <fieldset>
          <legend>图形</legend>
          <div class="cells">${SHAPES.map((s, i) => html`<button class=${classMap({ cell: true, on: i === this.picked })} @click=${() => (this.picked = i)}><shape-preview .shape=${s}></shape-preview></button>`)}</div>
          <div class="scroll">
            <span class="knob"><svg width="9" height="6" viewBox="0 0 9 6"><path d="M1 5l3.500-3.500L8 5" fill="none" stroke="#4d6185" stroke-width="2"/></svg></span>
            <span class="thumb"><svg width="8" height="8" viewBox="0 0 8 8"><path d="M0 .5h7M0 2.500h7M0 4.500h7M0 6.500h7" stroke="#8cb0f8"/></svg></span>
          </div>
        </fieldset>
      </section>

      <svg class="marks" aria-hidden="true">
        <ellipse cx="470.500" cy="188.500" rx="90" ry="51.500" stroke-width="2"/>
        <path d="M127 315L210 140M210 140L603 196M603 197L534 428"/>
        <path class="solid" stroke="none" d="M210 139L201 147L211 151ZM604 197L594 200L596 191ZM533 430L532 418L541 422Z"/>
      </svg>
    `;
  }
}
